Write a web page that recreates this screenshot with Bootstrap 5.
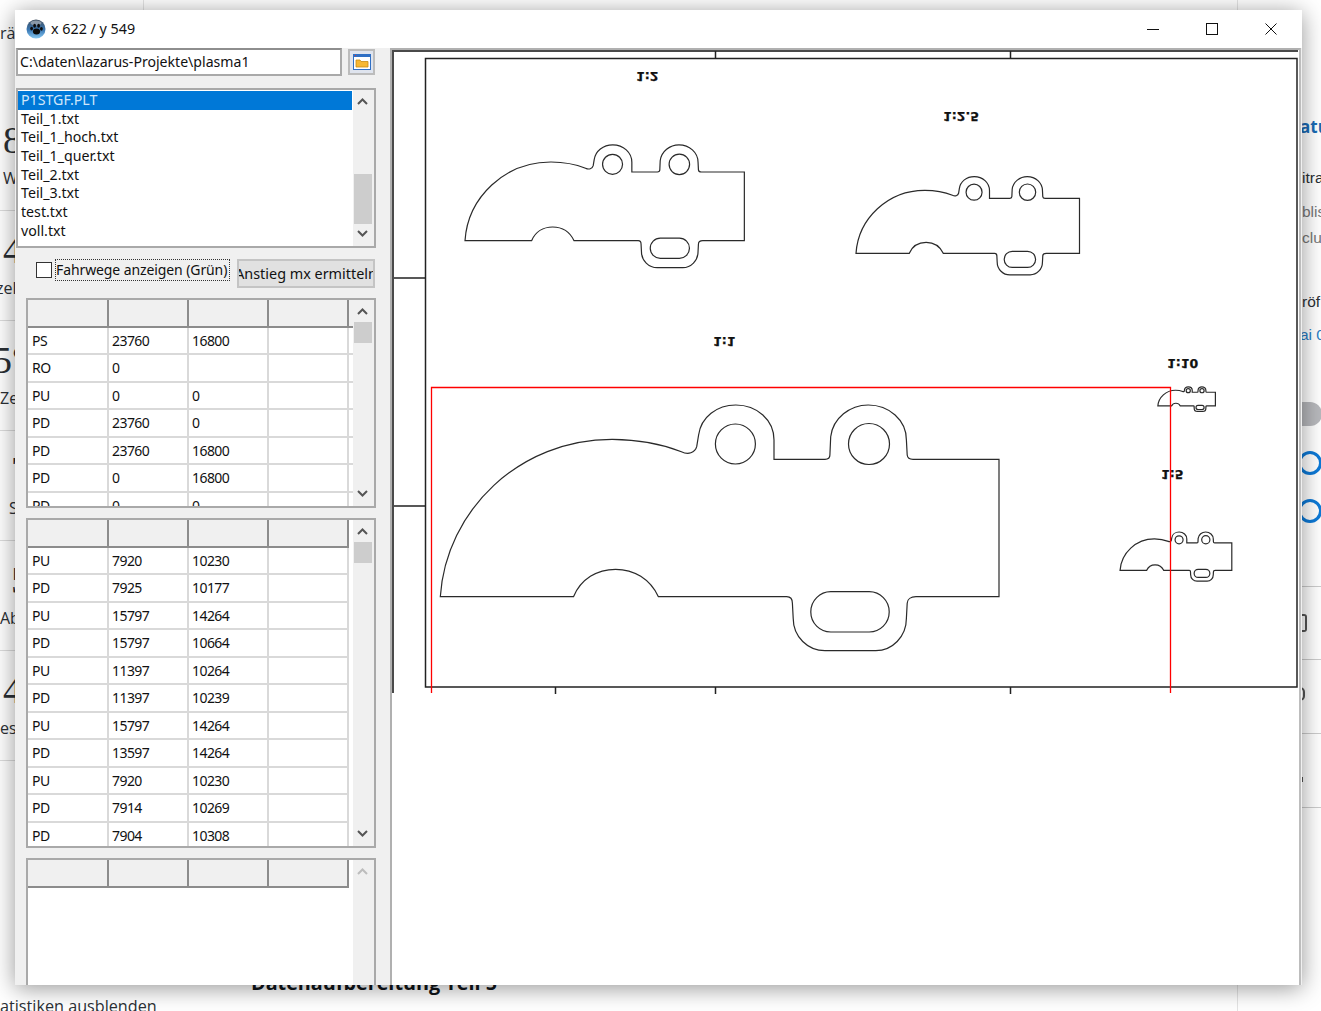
<!DOCTYPE html>
<html lang="de">
<head>
    <meta charset="UTF-8">
    <meta name="viewport" content="width=device-width, initial-scale=1.0">
    <title>x 622 / y 549</title>
    <link href="https://cdn.jsdelivr.net/npm/bootstrap@5.3.1/dist/css/bootstrap.min.css" rel="stylesheet">
    <style>
        html, body { height: 100%; }
        body {
            background: #fff;
            overflow: hidden;
            font-family: "Noto Sans", "Liberation Sans", sans-serif;
            color: #111;
        }

        /* page behind the window */
        .back-page { width: 1321px; height: 1011px; font-family: "Open Sans", sans-serif; color: #2b3035; }
        .back-left { width: 144px; }
        .back-top { height: 101px; padding-top: 21px; font-size: 16px; border-right: 1px solid #e4e4e4; }
        .stat-row { height: 110px; border-bottom: 1px solid #dcdcdc; padding: 20px 0 0 3px; }
        .stat-num { font-size: 38px; line-height: 38px; font-family: "Liberation Serif", serif; }
        .stat-cap { font-size: 16px; line-height: 22px; margin-top: 8px; }
        .num-far { margin-left: 8px; }
        .num-cut { margin-left: -10px; }
        .cap-flush { margin-left: -3px; }
        .cap-zel { margin-left: -7px; }
        .cap-far { margin-left: 6px; }
        .back-right { width: 84px; margin-left: auto; border-left: 1px solid #e4e4e4; padding-left: 62px; font-family: "Liberation Sans", sans-serif; font-size: 15.5px; line-height: 22px; white-space: nowrap; overflow: hidden; }
        .rt-title { margin-top: 116px; font-family: "Open Sans", sans-serif; font-size: 17px; font-weight: 700; color: #1a6bb5; }
        .rt-a { margin-top: 29px; padding-left: 2px; }
        .rt-b { margin-top: 12px; padding-left: 2px; color: #777; }
        .rt-c { margin-top: 4px; padding-left: 2px; color: #777; }
        .rt-d { margin-top: 42px; padding-left: 2px; }
        .rt-e { margin-top: 11px; color: #2b7cc4; }
        .rt-pill { margin-top: 56px; height: 24px; width: 22px; background: #b8b9bd; border-radius: 0 12px 12px 0; }
        .rt-ring { width: 24px; height: 24px; margin-left: -2px; border: 3px solid #0d7ad8; border-radius: 50%; }
        .rt-ring1 { margin-top: 25px; }
        .rt-ring2 { margin-top: 24px; }
        .rt-line { height: 1px; background: #ccc; margin-left: -62px; width: 84px; }
        .rt-line1 { margin-top: 63px; }
        .rt-icon1 { margin-top: 27px; margin-bottom: 27px; height: 18px; width: 7px; border: 2px solid #555; border-left: 0; border-radius: 0 3px 3px 0; }
        .rt-icon2 { margin-top: 27px; margin-bottom: 32px; height: 14px; width: 5px; border: 2px solid #555; border-left: 0; border-radius: 0 6px 6px 0; }
        .rt-mark { margin-top: 43px; margin-bottom: 25px; height: 5px; width: 3px; background: #555; }
        .back-bottom { bottom: -6px; left: 0; font-size: 16.2px; line-height: 22px; }
        .back-head { top: 968px; left: 251px; font-size: 19.8px; font-weight: 700; color: #10151a; }

        /* the Lazarus window */
        .app-win {
            position: absolute;
            left: 15px;
            top: 10px;
            width: 1287px;
            height: 975px;
            background: #f0f0f0;
            box-shadow: 0 3px 22px rgba(0, 0, 0, .42);
        }
        .title-bar { height: 38px; background: #fff; padding: 0 2px 1px 11px; font-size: 14.3px; gap: 5px; }
        .win-btns { margin-left: auto; }
        .win-btn { width: 59px; height: 37px; display: flex; align-items: center; justify-content: center; }
        .win-main { height: 937px; }

        .left-side { width: 375px; flex: none; }
        .path-row { padding-left: 1px; height: 28px; }
        .path-input {
            width: 326px;
            height: 28px;
            flex: none;
            border: 2px solid #a9a9a9;
            border-top-color: #8e8e8e;
            border-radius: 0;
            padding: 0 2px 2px;
            font-size: 14.1px;
            color: #111;
            background: #fff;
            line-height: 20px;
        }
        .folder-btn {
            width: 27px;
            height: 26px;
            margin: 1px 0 0 6px;
            padding: 0;
            border: 2px solid #bcbcbc;
            border-radius: 0;
            background: #dfe4ee;
            display: flex;
            align-items: center;
            justify-content: center;
        }

        .file-box {
            width: 360px;
            height: 160px;
            margin: 12px 0 0 1px;
            border: 2px solid #a9a9a9;
            background: #fff;
            overflow: hidden;
        }
        .file-list { width: 335px; padding: 1px 1px 0 0; border-radius: 0; }
        .file-list .list-group-item {
            height: 18.7px;
            line-height: 18px;
            padding: 0 0 0 3px;
            border: 0;
            border-radius: 0;
            font-size: 14.2px;
            color: #111;
            background: transparent;
        }
        .file-list .list-group-item.active { background: #0078d7; color: #cfe6fa; }

        .scroll-col { width: 21px; background: #f0f0f0; margin-left: auto; padding-right: 2px; position: relative; flex: none; }
        .scroll-arrow { display: block; margin: 0 auto; }
        .scroll-thumb { position: absolute; left: 1px; right: 2px; background: #cdcdcd; }
        .scroll-foot { position: absolute; left: 0; right: 2px; text-align: center; line-height: 0; }

        .tool-row { height: 29px; margin: 11px 0 0 0; padding-left: 21px; }
        .chk-box { width: 16px; height: 16px; border: 1px solid #333; background: #fff; flex: none; margin-top: 3px; }
        .chk-text {
            width: 175px;
            height: 22px;
            flex: none;
            margin-left: 3px;
            border: 1px dotted #333;
            font-size: 14px;
            letter-spacing: -.1px;
            line-height: 19px;
            white-space: nowrap;
            overflow: hidden;
        }
        .mx-btn {
            width: 138px;
            height: 29px;
            flex: none;
            margin-left: 7px;
            padding: 0;
            background: #e1e1e1;
            border: 2px solid #c4c4c4;
            border-radius: 0;
            font-size: 14.4px;
            line-height: 25px;
            color: #111;
            white-space: nowrap;
            overflow: hidden;
            display: flex;
            justify-content: center;
        }

        .grid-box {
            width: 350px;
            margin: 10px 0 0 11px;
            border: 2px solid #a9a9a9;
            background: #fff;
            overflow: hidden;
        }
        .grid-a { height: 210px; }
        .grid-b { height: 330px; }
        .grid-c { height: 127px; border-bottom: 0; }
        .grid-body { width: 325px; height: 100%; overflow: hidden; }
        .cell-table { width: 321px; table-layout: fixed; margin: 0; border-collapse: separate; border-spacing: 0; }
        .grid-a .cell-table { width: 325px; }
        .cell-table th, .cell-table td {
            width: 80px;
            padding: 0 0 0 3px;
            font-size: 14px;
            letter-spacing: -.55px;
            font-weight: 400;
            color: #111;
            line-height: 25.5px;
            background: #fff;
            box-shadow: none;
            border: 0;
            border-right: 2px solid #d9d9d9;
            border-bottom: 2px solid #d9d9d9;
        }
        .cell-table th:first-child, .cell-table td:first-child { width: 81px; padding-left: 4px; }
        .cell-table th {
            height: 27.5px;
            background: #f0f0f0;
            border-right-color: #8c8c8c;
            border-bottom-color: #8c8c8c;
        }
        .cell-table td { height: 27.5px; }
        .cell-table .end-cell { width: 4px; padding: 0; border-right: 0; }

        .plot-side {
            width: 911px;
            border-left: 2px solid #b0b0b0;
            border-top: 2px solid #b0b0b0;
            border-right: 2px solid #bdbdbd;
            margin-right: 1px;
            background: #fff;
            overflow: hidden;
        }
        .plot-svg { display: block; width: 907px; height: 935px; }
        .plot-line { fill: none; stroke: #2a2a2a; stroke-width: 1.2; vector-effect: non-scaling-stroke; }
        .plot-ax { fill: none; stroke: #222; stroke-width: 1.5; }
        .plot-rim { fill: none; stroke: #4a4a4a; stroke-width: 2; }
        .plot-red { fill: none; stroke: #ff0000; stroke-width: 1.3; }
        .plot-lbl { font-family: "DejaVu Sans", sans-serif; font-weight: 700; font-size: 12.5px; fill: #111; stroke: #111; stroke-width: .25; }
    </style>
</head>
<body>
    <div class="back-page d-flex position-relative">
        <div class="back-left">
            <div class="back-top">rä</div>
            <div class="stat-row"><div class="stat-num">8</div><div class="stat-cap">W</div></div>
            <div class="stat-row"><div class="stat-num">4</div><div class="stat-cap cap-zel">zel</div></div>
            <div class="stat-row"><div class="stat-num num-cut">5°</div><div class="stat-cap cap-flush">Ze</div></div>
            <div class="stat-row"><div class="stat-num num-far">7</div><div class="stat-cap cap-far">S</div></div>
            <div class="stat-row"><div class="stat-num num-far">5</div><div class="stat-cap cap-flush">Ab</div></div>
            <div class="stat-row"><div class="stat-num">4</div><div class="stat-cap cap-flush">es</div></div>
        </div>
        <div class="back-right">
            <div class="rt-title">atu</div>
            <div class="rt-a">itra</div>
            <div class="rt-b">blis</div>
            <div class="rt-c">cluc</div>
            <div class="rt-d">röf</div>
            <div class="rt-e">ai 0</div>
            <div class="rt-pill"></div>
            <div class="rt-ring rt-ring1"></div>
            <div class="rt-ring rt-ring2"></div>
            <div class="rt-line rt-line1"></div>
            <div class="rt-icon1"></div>
            <div class="rt-line"></div>
            <div class="rt-icon2"></div>
            <div class="rt-line"></div>
            <div class="rt-mark"></div>
            <div class="rt-line"></div>
        </div>
        <div class="position-absolute back-bottom">atistiken ausblenden</div>
        <div class="position-absolute back-head">Datenaufbereitung Teil 5</div>
    </div>

    <div class="app-win d-flex flex-column">
        <div class="title-bar d-flex align-items-center">
            <svg width="20" height="20" viewBox="0 0 20 20">
                <defs>
                    <linearGradient id="ball" x1="0" y1="0" x2="0" y2="1">
                        <stop offset="0" stop-color="#3e4c5c"/>
                        <stop offset=".55" stop-color="#3a78b4"/>
                        <stop offset="1" stop-color="#86c8f2"/>
                    </linearGradient>
                </defs>
                <circle cx="10" cy="10" r="9.5" fill="url(#ball)"/>
                <ellipse cx="10" cy="4" rx="5.5" ry="2.4" fill="#aab4be" opacity=".7"/>
                <ellipse cx="10.5" cy="12.5" rx="3.6" ry="3" fill="#0b0b0b"/>
                <ellipse cx="5.6" cy="9.6" rx="1.4" ry="1.9" fill="#0b0b0b"/>
                <ellipse cx="8.6" cy="6.8" rx="1.4" ry="2" fill="#0b0b0b"/>
                <ellipse cx="12.6" cy="6.8" rx="1.4" ry="2" fill="#0b0b0b"/>
                <ellipse cx="15.4" cy="9.8" rx="1.4" ry="1.9" fill="#0b0b0b"/>
            </svg>
            <span>x 622 / y 549</span>
            <div class="win-btns d-flex">
                <div class="win-btn"><svg width="12" height="12" viewBox="0 0 12 12"><path d="M0 6.5h12" stroke="#111" fill="none"/></svg></div>
                <div class="win-btn"><svg width="12" height="12" viewBox="0 0 12 12"><rect x=".5" y=".5" width="11" height="11" stroke="#111" fill="none"/></svg></div>
                <div class="win-btn"><svg width="12" height="12" viewBox="0 0 12 12"><path d="M.5 .5l11 11M11.5 .5l-11 11" stroke="#111" fill="none"/></svg></div>
            </div>
        </div>

        <div class="win-main d-flex">
            <div class="left-side">
                <div class="path-row d-flex">
                    <input class="form-control path-input" type="text" value="C:\daten\lazarus-Projekte\plasma1">
                    <button class="btn folder-btn" type="button" aria-label="Ordner">
                        <svg width="18" height="16" viewBox="0 0 18 16">
                            <rect x=".5" y=".5" width="17" height="15" fill="#fff" stroke="#2f6fc4"/>
                            <rect x="1" y="1" width="16" height="2" fill="#2f6fc4"/>
                            <rect x="2" y="1" width="1" height="1" fill="#d33"/>
                            <path d="M3 6h4l1 1.5h7V13H3z" fill="#f7b733" stroke="#c98a12" stroke-width=".8"/>
                        </svg>
                    </button>
                </div>

                <div class="file-box d-flex">
                    <ul class="list-group file-list">
                        <li class="list-group-item active">P1STGF.PLT</li>
                        <li class="list-group-item">Teil_1.txt</li>
                        <li class="list-group-item">Teil_1_hoch.txt</li>
                        <li class="list-group-item">Teil_1_quer.txt</li>
                        <li class="list-group-item">Teil_2.txt</li>
                        <li class="list-group-item">Teil_3.txt</li>
                        <li class="list-group-item">test.txt</li>
                        <li class="list-group-item">voll.txt</li>
                    </ul>
                    <div class="scroll-col">
                        <svg class="scroll-arrow mt-2" width="11" height="7" viewBox="0 0 11 7"><path d="M1 6l4.5-4.5L10 6" fill="none" stroke="#555" stroke-width="2"/></svg>
                        <div class="scroll-thumb" style="top: 84px; height: 50px"></div>
                        <div class="scroll-foot" style="bottom: 9px"><svg width="11" height="7" viewBox="0 0 11 7"><path d="M1 1l4.5 4.5L10 1" fill="none" stroke="#555" stroke-width="2"/></svg></div>
                    </div>
                </div>

                <div class="tool-row d-flex">
                    <div class="chk-box"></div>
                    <div class="chk-text">Fahrwege anzeigen (Grün)</div>
                    <button class="btn mx-btn" type="button">Anstieg mx ermitteln</button>
                </div>

                <div class="grid-box grid-a d-flex">
                    <div class="grid-body">
                        <table class="table cell-table">
                            <thead><tr><th></th><th></th><th></th><th></th><th class="end-cell"></th></tr></thead>
                            <tbody>
                                <tr><td>PS</td><td>23760</td><td>16800</td><td></td><td class="end-cell"></td></tr>
                                <tr><td>RO</td><td>0</td><td></td><td></td><td class="end-cell"></td></tr>
                                <tr><td>PU</td><td>0</td><td>0</td><td></td><td class="end-cell"></td></tr>
                                <tr><td>PD</td><td>23760</td><td>0</td><td></td><td class="end-cell"></td></tr>
                                <tr><td>PD</td><td>23760</td><td>16800</td><td></td><td class="end-cell"></td></tr>
                                <tr><td>PD</td><td>0</td><td>16800</td><td></td><td class="end-cell"></td></tr>
                                <tr><td>PD</td><td>0</td><td>0</td><td></td><td class="end-cell"></td></tr>
                            </tbody>
                        </table>
                    </div>
                    <div class="scroll-col">
                        <svg class="scroll-arrow mt-2" width="11" height="7" viewBox="0 0 11 7"><path d="M1 6l4.5-4.5L10 6" fill="none" stroke="#555" stroke-width="2"/></svg>
                        <div class="scroll-thumb" style="top: 22px; height: 21px"></div>
                        <div class="scroll-foot" style="bottom: 9px"><svg width="11" height="7" viewBox="0 0 11 7"><path d="M1 1l4.5 4.5L10 1" fill="none" stroke="#555" stroke-width="2"/></svg></div>
                    </div>
                </div>

                <div class="grid-box grid-b d-flex">
                    <div class="grid-body">
                        <table class="table cell-table">
                            <thead><tr><th></th><th></th><th></th><th></th></tr></thead>
                            <tbody>
                                <tr><td>PU</td><td>7920</td><td>10230</td><td></td></tr>
                                <tr><td>PD</td><td>7925</td><td>10177</td><td></td></tr>
                                <tr><td>PU</td><td>15797</td><td>14264</td><td></td></tr>
                                <tr><td>PD</td><td>15797</td><td>10664</td><td></td></tr>
                                <tr><td>PU</td><td>11397</td><td>10264</td><td></td></tr>
                                <tr><td>PD</td><td>11397</td><td>10239</td><td></td></tr>
                                <tr><td>PU</td><td>15797</td><td>14264</td><td></td></tr>
                                <tr><td>PD</td><td>13597</td><td>14264</td><td></td></tr>
                                <tr><td>PU</td><td>7920</td><td>10230</td><td></td></tr>
                                <tr><td>PD</td><td>7914</td><td>10269</td><td></td></tr>
                                <tr><td>PD</td><td>7904</td><td>10308</td><td></td></tr>
                            </tbody>
                        </table>
                    </div>
                    <div class="scroll-col">
                        <svg class="scroll-arrow mt-2" width="11" height="7" viewBox="0 0 11 7"><path d="M1 6l4.5-4.5L10 6" fill="none" stroke="#555" stroke-width="2"/></svg>
                        <div class="scroll-thumb" style="top: 22px; height: 21px"></div>
                        <div class="scroll-foot" style="bottom: 9px"><svg width="11" height="7" viewBox="0 0 11 7"><path d="M1 1l4.5 4.5L10 1" fill="none" stroke="#555" stroke-width="2"/></svg></div>
                    </div>
                </div>

                <div class="grid-box grid-c d-flex">
                    <div class="grid-body">
                        <table class="table cell-table">
                            <thead><tr><th></th><th></th><th></th><th></th></tr></thead>
                        </table>
                    </div>
                    <div class="scroll-col">
                        <svg class="scroll-arrow mt-2" width="11" height="7" viewBox="0 0 11 7"><path d="M1 6l4.5-4.5L10 6" fill="none" stroke="#bdbdbd" stroke-width="2"/></svg>
                    </div>
                </div>
            </div>

            <div class="plot-side flex-grow-1">
                <!-- viewBox is in page coordinates, so the plot can be read off the screenshot -->
                <svg class="plot-svg" viewBox="392 50 907 935">
                    <defs>
                        <g id="part">
                            <path class="plot-line" d="M440.3 596.7C446 510 520 439 612.5 439.3C640 439.5 662 444 681.4 451.7C688 455 695 453 696.7 446.7L698.6 435C701 417 717 405 735.8 405C757 405 774 420 774 440V459.3H825C828 459.3 829.9 458 829.9 455L830.7 436.7C833 418 850 405 868.2 405C889 405 906.4 420 906.4 440L907.2 455C907.5 458 910 459.3 913 459.3H999V596.7H916C911 596.7 907.2 599 907.2 603.3L906.4 618.3C906.4 637 892 650.7 875.8 650.7H825C808 650.7 793.2 637 793.2 618.3L792.4 603.3C792.4 599 790 596.7 786.7 596.7H658.4C650 579 634 569.3 615.6 569.3C597 569.3 581 579 573.5 596.7Z"/>
                            <circle class="plot-line" cx="735.4" cy="444" r="20"/>
                            <circle class="plot-line" cx="869" cy="444" r="20.5"/>
                            <rect class="plot-line" x="810.8" y="591.7" width="78.4" height="40.3" rx="20" ry="20"/>
                        </g>
                    </defs>

                    <!-- window rim and plot frame -->
                    <path class="plot-rim" d="M393 50V693M392 51H1298"/>
                    <path class="plot-ax" d="M425.5 58.5H1297V687H425.5ZM394 278H425M394 506H425M715.5 51V58M1010.5 51V58M555.5 687V694M715.5 687V694M1010.5 687V694"/>

                    <use href="#part"/>
                    <use href="#part" transform="translate(244.85 -57.65) scale(.5)"/>
                    <use href="#part" transform="translate(679.9 14.6) scale(.4)"/>
                    <use href="#part" transform="translate(1032 451) scale(.2)"/>
                    <use href="#part" transform="translate(1112.5 346.3) scale(.103 .1)"/>

                    <!-- scale labels, plotted upside down -->
                    <text class="plot-lbl" transform="translate(636 72) scale(1 -1)">1:2</text>
                    <text class="plot-lbl" transform="translate(943 112) scale(1 -1)">1:2.5</text>
                    <text class="plot-lbl" transform="translate(713 337) scale(1 -1)">1:1</text>
                    <text class="plot-lbl" transform="translate(1167 359) scale(1 -1)">1:10</text>
                    <text class="plot-lbl" transform="translate(1161 470) scale(1 -1)">1:5</text>

                    <path class="plot-red" d="M431.5 693V387.5H1170.5V693"/>
                </svg>
            </div>
        </div>
    </div>

    <script src="https://cdn.jsdelivr.net/npm/bootstrap@5.3.1/dist/js/bootstrap.bundle.min.js"></script>
</body>
</html>
